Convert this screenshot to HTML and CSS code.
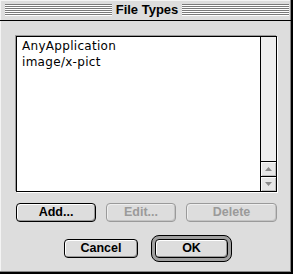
FILE: index.html
```html
<!DOCTYPE html>
<html>
<head>
<meta charset="utf-8">
<link rel="stylesheet" href="styles.css">
</head>
<body>
<div class="window">
  <div class="titlebar">
    <span class="stripes"></span>
    <span class="title">File Types</span>
    <span class="stripes"></span>
  </div>
  <div class="content">
    <div class="listbox">
      <div class="items">
        <div class="item">AnyApplication</div>
        <div class="item">image/x-pict</div>
      </div>
      <div class="scrollbar">
        <div class="track"></div>
        <div class="arrow"><svg width="7" height="4" viewBox="0 0 7 4"><path d="M3.5 0 L7 4 L0 4 Z" fill="#8a8a8a"/></svg></div>
        <div class="arrow"><svg width="7" height="4" viewBox="0 0 7 4"><path d="M0 0 L7 0 L3.5 4 Z" fill="#8a8a8a"/></svg></div>
      </div>
    </div>
    <div class="row1">
      <button class="btn add">Add...</button>
      <button class="btn edit disabled">Edit...</button>
      <button class="btn del disabled">Delete</button>
    </div>
    <div class="row2">
      <button class="btn cancel">Cancel</button>
      <span class="ring"><button class="btn ok">OK</button></span>
    </div>
  </div>
</div>
</body>
</html>
```
FILE: styles.css
```css
html, body { margin: 0; padding: 0; background: #dddddd; }
.window {
  width: 293px; height: 274px; box-sizing: border-box;
  background: #dddddd;
  border-right: 2px solid #000; border-bottom: 2px solid #000;
  box-shadow: inset -1px -1px 0 #888, inset 1px 1px 0 #f4f4f4;
  display: flex; flex-direction: column;
  font-family: "Liberation Sans", Arial, sans-serif;
}
.titlebar {
  height: 20px; border-bottom: 1px solid #000;
  display: flex; align-items: center;
  padding: 0 2px 0 5px;
}
.stripes {
  flex: 1; height: 12px;
  background: repeating-linear-gradient(to bottom, #7a7a7a 0 1px, #ffffff 1px 2px);
}
.title {
  font-weight: bold; font-size: 13px; color: #000;
  margin: 0 4px; line-height: 20px;
}
.content {
  flex: 1; display: flex; flex-direction: column;
  padding: 15px 0 0 16px;
}
.listbox {
  width: 261px; height: 156px; box-sizing: border-box;
  border: 1px solid #000; background: #fff;
  box-shadow: -1px -1px 0 #9a9a9a, 1px 1px 0 #ffffff;
  display: flex;
}
.items {
  flex: 1; padding: 1px 0 0 5px;
  font-family: "DejaVu Sans", Verdana, sans-serif; font-size: 12px;
  letter-spacing: 0.3px;
  line-height: 16px; color: #000;
}
.scrollbar {
  width: 15px; border-left: 1px solid #000; background: #eeeeee;
  display: flex; flex-direction: column;
}
.track { flex: 1; }
.arrow {
  height: 14px; border-top: 1px solid #000;
  background: #e6e6e6;
  box-shadow: inset 1px 1px 0 #fafafa, inset -1px -1px 0 #bdbdbd;
  display: flex; align-items: center; justify-content: center;
}
.arrow svg { display: block; }
.btn {
  box-sizing: border-box; height: 19px; margin: 0; padding: 0;
  border: 1px solid #000; border-radius: 4px;
  background: #dddddd;
  box-shadow: inset 1px 1px 0 #ffffff, inset -1px -1px 0 #999999;
  font-family: "Liberation Sans", Arial, sans-serif;
  font-weight: bold; font-size: 12.5px; color: #000;
  line-height: 17px;
}
.btn.disabled {
  border-color: #9a9a9a; color: #9a9a9a;
  box-shadow: inset 1px 1px 0 #eeeeee, inset -1px -1px 0 #c4c4c4;
}
.row1 { display: flex; gap: 10px; margin-top: 11px; }
.add { width: 80px; }
.edit { width: 70px; }
.del { width: 91px; }
.row2 {
  display: flex; align-items: center; gap: 13px;
  margin: 13px 0 0 48px;
}
.cancel { width: 74px; }
.ring {
  display: flex; padding: 3px;
  border: 1px solid #000; border-radius: 8px;
  background: #a0a0a0;
}
.ok { width: 73px; }
```
